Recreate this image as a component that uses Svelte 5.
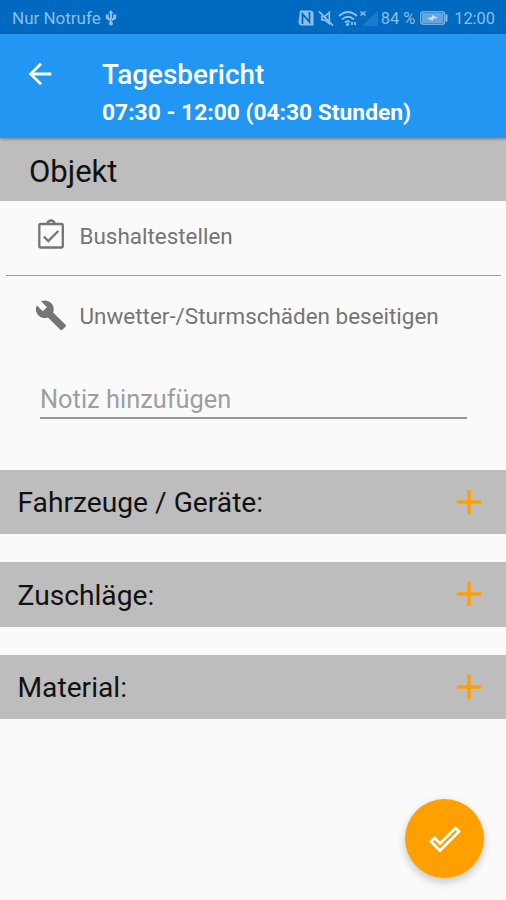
<script>
  let note = '';

  const sections = ['Fahrzeuge / Geräte:', 'Zuschläge:', 'Material:'];
</script>

<div class="screen">
  <div class="status">
    <span class="carrier">Nur Notrufe</span>
    <svg class="usb" width="12" height="16" viewBox="0 0 12 16">
      <path d="M6 0l2.500 3.500h-5zM5 3h2v10H5zM0.800 4.500h3v3L5.500 9v2.500L0.800 8.500zM11.200 4.500h-3v3L6.500 9v2.500l4.700-3z" />
      <circle cx="6" cy="13.500" r="2" />
    </svg>
    <div class="indicators">
      <svg class="nfc" width="16" height="16" viewBox="0 0 16 16">
        <path class="plate" d="M2 0.500h10q3.500 0 3.500 3.500v11.500H4Q0.500 15.500 0.500 12z" />
        <path class="wave" d="M4.500 14V4l7 8V2" />
      </svg>
      <svg class="mute" width="16" height="17" viewBox="0 0 17 17">
        <path d="M4 6.500h3L12 2v12l-5-4H4z" />
        <path d="M1 1l15 15" />
      </svg>
      <svg class="wifi" width="20" height="17" viewBox="0 0 20 17">
        <path d="M1 6q9-8 18 0M4 9.500q6-5.500 12 0M7 12.500q3-2.500 5 0" />
        <circle cx="9.500" cy="14.500" r="1.600" />
        <path class="arrows" d="M14 15v-3M17 12v3" />
      </svg>
      <svg class="signal" width="20" height="17" viewBox="0 0 20 17">
        <path class="cross" d="M1.500 1.500l5 4M6.500 1.500l-5 4" />
        <path class="bars" d="M19 1v15H3z" />
      </svg>
      <span class="percent">84 %</span>
      <svg class="battery" width="28" height="14" viewBox="0 0 28 14">
        <rect class="shell" x="0.700" y="0.700" width="24" height="12.600" rx="2.500" />
        <rect class="level" x="2" y="2" width="21.500" height="10" />
        <path class="bolt" d="M7 7l5-1V4l6 3-5 1v2z" />
        <path class="cap" d="M25.500 3.500h2v7h-2z" />
      </svg>
      <span class="clock">12:00</span>
    </div>
  </div>

  <header>
    <button class="back" aria-label="Zurück">
      <svg width="34" height="34" viewBox="0 0 24 24">
        <path d="M20 11H7.830l5.590-5.590L12 4l-8 8 8 8 1.410-1.410L7.830 13H20v-2z" />
      </svg>
    </button>
    <div class="titles">
      <h1>Tagesbericht</h1>
      <p>07:30 - 12:00 (04:30 Stunden)</p>
    </div>
  </header>

  <main>
    <h2>Objekt</h2>
    <div class="row object">
      <svg class="clipboard" width="34" height="34" viewBox="0 0 34 34">
        <rect x="5.300" y="6" width="23.500" height="23.500" rx="1.500" />
        <path d="M13.500 5.500a3.500 3 0 0 1 7 0M9.800 18.500l4.500 4.500 10-10" />
      </svg>
      <span>Bushaltestellen</span>
    </div>
    <div class="row task">
      <svg width="34" height="34" viewBox="-0.500 0 25 25">
        <path
          d="M22.700 19l-9.100-9.100c.9-2.300.4-5-1.500-6.900-2-2-5-2.400-7.400-1.300L9 6 6 9 1.600 4.700C.4 7.100.9 10.100 2.900 12.100c1.900 1.900 4.600 2.400 6.900 1.500l9.100 9.100c.4.4 1 .4 1.400 0l2.300-2.300c.5-.4.5-1.100.1-1.400z"
        />
      </svg>
      <span>Unwetter-/Sturmschäden beseitigen</span>
    </div>
    <input type="text" placeholder="Notiz hinzufügen" bind:value={note} />

    {#each sections as section}
      <section>
        <h3>{section}</h3>
        <button class="add" aria-label="Hinzufügen">
          <svg width="42" height="42" viewBox="0 0 24 24">
            <path d="M19 13h-6v6h-2v-6H5v-2h6V5h2v6h6v2z" />
          </svg>
        </button>
      </section>
    {/each}
  </main>

  <button class="fab" aria-label="Speichern">
    <svg width="34" height="30" viewBox="0 0 34 30">
      <path d="M3 17.500L6.500 14L12 19.500L27.500 4L31 7.500L12 26.500Z" />
    </svg>
  </button>
</div>

<style>
  :global(body) {
    margin: 0;
  }

  .screen {
    position: relative;
    height: 900px;
    overflow: hidden;
    background: #fafafa;
    font-family: Roboto, 'Liberation Sans', sans-serif;
  }

  button {
    display: flex;
    align-items: center;
    justify-content: center;
    padding: 0;
    border: none;
    background: none;
    cursor: pointer;
  }

  h1,
  h2,
  h3,
  p {
    margin: 0;
    font-weight: 400;
  }

  svg {
    flex: none;
  }

  .status {
    display: flex;
    align-items: center;
    box-sizing: border-box;
    height: 34px;
    padding: 2px 11px 0 12px;
    background: #0069c0;
    color: #8ebfe9;
    font-size: 17px;
    white-space: nowrap;
  }

  .usb {
    margin-left: 4px;
    fill: #8ebfe9;
  }

  .indicators {
    display: flex;
    align-items: center;
    margin-left: auto;
    font-size: 16.400px;
  }

  .plate {
    fill: #8ebfe9;
  }

  .wave {
    fill: none;
    stroke: #0069c0;
    stroke-width: 1.800;
  }

  .mute,
  .wifi {
    margin-left: 4px;
    fill: none;
    stroke: #8ebfe9;
    stroke-width: 1.800;
  }

  .wifi circle {
    fill: #8ebfe9;
    stroke: none;
  }

  .signal {
    margin-left: 1px;
  }

  .cross {
    stroke: #8ebfe9;
    stroke-width: 1.600;
  }

  .bars {
    fill: #1b7bce;
  }

  .percent {
    margin-left: 2px;
  }

  .battery {
    margin-left: 5px;
  }

  .shell {
    fill: none;
    stroke: #76b0e2;
    stroke-width: 1.400;
  }

  .level {
    fill: #65a5dd;
  }

  .bolt {
    fill: #c4e0f8;
  }

  .cap {
    fill: #8ebfe9;
  }

  .clock {
    margin-left: 6px;
  }

  header {
    position: relative;
    display: flex;
    box-sizing: border-box;
    height: 104px;
    padding: 23px 23px 0;
    background: #2196f3;
    box-shadow: 0 1px 3px rgba(0, 0, 0, 0.35);
    color: #fff;
  }

  .back {
    width: 34px;
    height: 34px;
    fill: #fff;
  }

  .titles {
    margin-left: 45px;
  }

  h1 {
    font-size: 27.900px;
    font-weight: 500;
    line-height: 36px;
  }

  p {
    margin-top: 5px;
    font-size: 22.800px;
    font-weight: 700;
    line-height: 30px;
  }

  h2 {
    height: 63px;
    padding-left: 29px;
    background: #bdbdbd;
    color: #111;
    font-size: 31px;
    line-height: 67px;
  }

  .row {
    display: flex;
    align-items: center;
    gap: 11.500px;
    padding-left: 28px;
    color: #757575;
    fill: #757575;
    font-size: 22.450px;
  }

  .object {
    height: 68px;
    margin: 0 5px 0 6px;
    padding-bottom: 6px;
    border-bottom: 1px solid #9a9a9a;
  }

  .object span {
    padding-top: 2px;
  }

  .clipboard {
    fill: none;
    stroke: #757575;
    stroke-width: 2.300;
  }

  .task {
    height: 80px;
    padding-left: 34px;
  }

  input {
    display: block;
    box-sizing: border-box;
    width: 427px;
    height: 41px;
    margin: 22px 0 51px 40px;
    padding: 2px 0 0;
    border: none;
    border-bottom: 2px solid #969696;
    outline: none;
    background: none;
    color: #212121;
    font-family: inherit;
    font-size: 25.400px;
  }

  input::placeholder {
    color: #9e9e9e;
    opacity: 1;
  }

  section {
    display: flex;
    align-items: center;
    justify-content: space-between;
    height: 64.500px;
    margin-bottom: 28.100px;
    padding: 0 16.500px 0 17.500px;
    background: #bdbdbd;
  }

  section:first-of-type {
    margin-top: -0.500px;
  }

  h3 {
    padding-top: 2px;
    color: #111;
    font-size: 28.200px;
  }

  .add {
    fill: #ffa000;
  }

  .fab {
    position: absolute;
    right: 22px;
    bottom: 22px;
    width: 79px;
    height: 79px;
    border-radius: 50%;
    background: #ffa000;
    box-shadow: 0 5px 8px rgba(0, 0, 0, 0.16), 0 1px 10px rgba(0, 0, 0, 0.06);
  }

  .fab path {
    fill: none;
    stroke: #fff;
    stroke-width: 2.700;
  }
</style>
